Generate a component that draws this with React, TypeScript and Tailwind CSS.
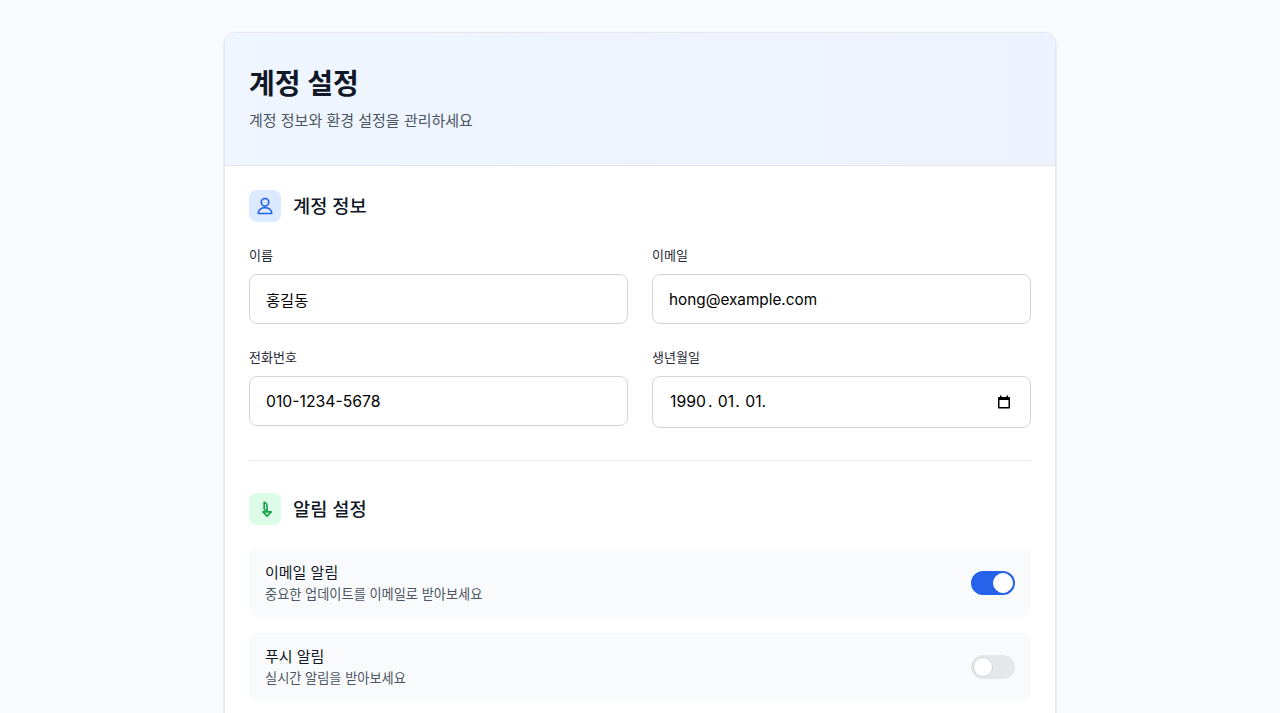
import React from "react";

const font = { fontFamily: '"Inter","Noto Sans CJK KR",sans-serif' };

function Field({ label, value, size }: { label: string; value: string; size: string }) {
  return (
    <div>
      <label className="mb-[10px] block text-[13px] leading-[18px] font-normal text-[#1f2937]">{label}</label>
      <input
        readOnly
        value={value}
        className={`block h-[50px] w-full rounded-lg border border-[#d1d5db] bg-white px-4 text-black outline-none ${size}`}
      />
    </div>
  );
}

function Toggle({ on }: { on: boolean }) {
  return (
    <div className={`flex h-6 w-11 items-center rounded-full border-2 ${on ? "justify-end border-[#2563eb] bg-[#2563eb]" : "justify-start border-[#e5e7eb] bg-[#e5e7eb]"}`}>
      <div className={`h-5 w-5 rounded-full border bg-white ${on ? "border-white" : "border-[#d1d5db]"}`} />
    </div>
  );
}

function Row({ title, desc, on }: { title: string; desc: string; on: boolean }) {
  return (
    <div className="flex h-[68px] items-center justify-between rounded-lg bg-[#f9fafb] px-4">
      <div>
        <div className="text-[15px] leading-[22px] font-normal text-[#111827]">{title}</div>
        <div className="text-[13.2px] leading-[20px] text-[#4b5563]">{desc}</div>
      </div>
      <Toggle on={on} />
    </div>
  );
}

export default function App() {
  return (
    <div style={font} className="min-h-screen bg-[#f9fafb] pt-8 pb-8">
      <div className="mx-auto w-[832px] overflow-hidden rounded-xl border border-[#e5e7eb] bg-white shadow-sm">
        <header className="h-[133px] border-b border-[#e5e7eb] bg-gradient-to-r from-[#eff6ff] to-[#eef2ff] px-6 pt-[26px]">
          <h1 className="text-[28px] leading-[50px] font-bold text-[#111827]">계정 설정</h1>
          <p className="text-[15px] leading-6 text-[#4b5563]">계정 정보와 환경 설정을 관리하세요</p>
        </header>
        <div className="p-6">
          <section className="border-b border-[#e5e7eb] pb-8">
            <div className="mb-6 flex items-center gap-3">
              <div className="flex h-8 w-8 items-center justify-center rounded-lg bg-[#dbeafe]">
                <svg width="20" height="20" viewBox="0 0 24 24" fill="none" stroke="#2563eb" strokeWidth="2" strokeLinecap="round" strokeLinejoin="round">
                  <circle cx="12" cy="7.5" r="4.5" />
                  <path d="M4 21v-1a8 6 0 0 1 16 0v1z" />
                </svg>
              </div>
              <h2 className="pt-0.5 text-[18.7px] leading-7 font-medium text-[#111827]">계정 정보</h2>
            </div>
            <div className="grid grid-cols-2 gap-x-6 gap-y-6">
              <Field label="이름" value="홍길동" size="text-[15.3px]" />
              <Field label="이메일" value="hong@example.com" size="text-[15.3px]" />
              <Field label="전화번호" value="010-1234-5678" size="text-[15.75px]" />
              <div>
                <label className="mb-[10px] block text-[13px] leading-[18px] font-normal text-[#1f2937]">생년월일</label>
                <div className="flex h-[52px] items-center justify-between rounded-lg border border-[#d1d5db] bg-white pr-[19px] pl-[17px] text-[15.75px] text-black">
                  <span className="[word-spacing:1px]">
                    1990<span className="ml-[2px]">.</span> 01<span className="ml-[1px]">.</span> 01.
                  </span>
                  <svg width="14" height="14" viewBox="0 0 14 14" fill="#000">
                    <path d="M3 0.5h1.5V2h5V0.5H11V2h1.2A.8.8 0 0 1 13 2.8v9.9a.8.8 0 0 1-.8.8H1.8a.8.8 0 0 1-.8-.8V2.8A.8.8 0 0 1 1.8 2H3zM2.5 5v7h9V5z" />
                  </svg>
                </div>
              </div>
            </div>
          </section>
          <section className="pt-8">
            <div className="mb-6 flex items-center gap-3">
              <div className="flex h-8 w-8 items-center justify-center rounded-lg bg-[#dcfce7]">
                <svg width="20" height="20" viewBox="0 0 24 24" fill="none" stroke="#16a34a" strokeWidth="2" strokeLinecap="round" strokeLinejoin="round">
                  <path d="M11 4c2 0 3.500 2.500 3.500 5v6M11 4v8l3.500 3" />
                  <path d="M9.500 15.500h10l-5 5z" />
                </svg>
              </div>
              <h2 className="pt-0.5 text-[18.7px] leading-7 font-medium text-[#111827]">알림 설정</h2>
            </div>
            <div className="flex flex-col gap-4">
              <Row title="이메일 알림" desc="중요한 업데이트를 이메일로 받아보세요" on />
              <Row title="푸시 알림" desc="실시간 알림을 받아보세요" on={false} />
            </div>
          </section>
        </div>
      </div>
    </div>
  );
}
